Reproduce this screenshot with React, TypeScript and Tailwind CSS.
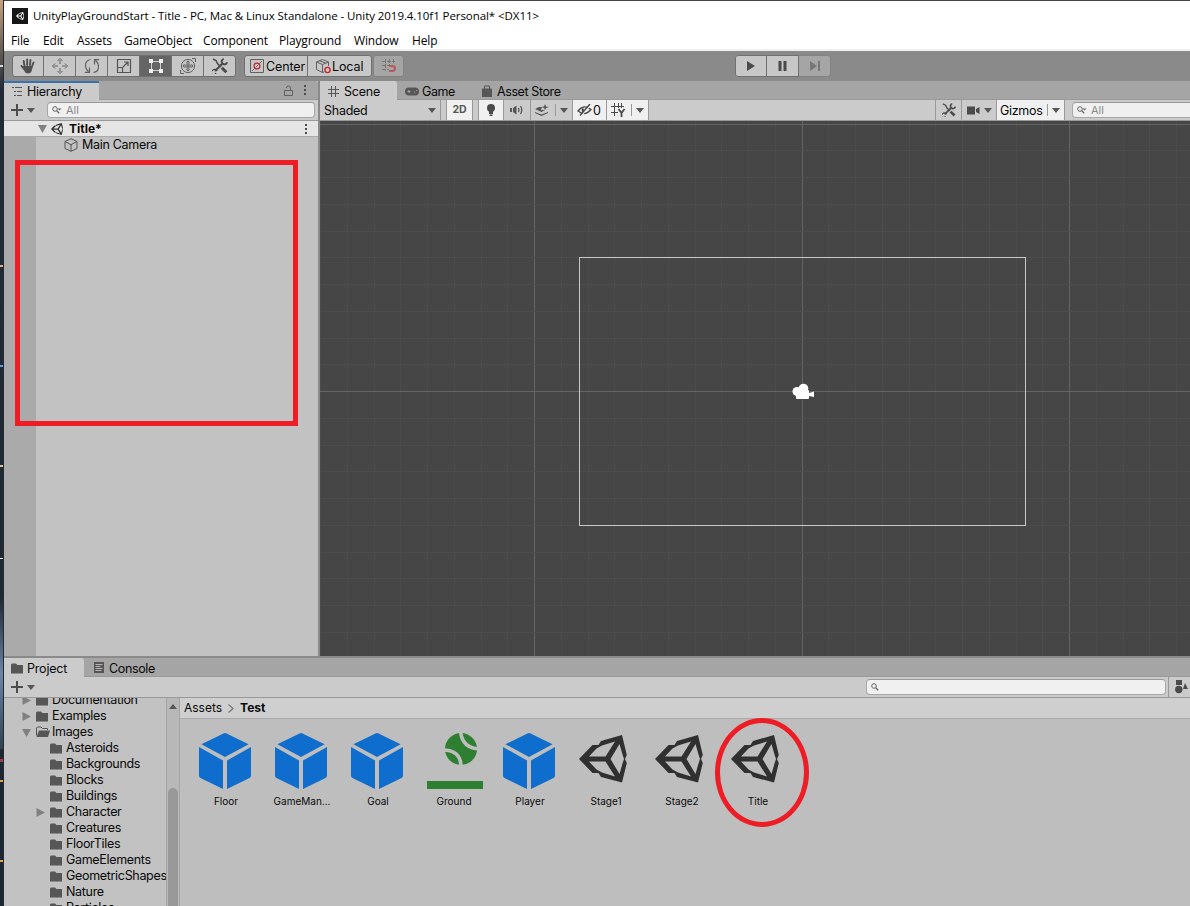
import type { ReactNode } from "react";

// ─── Icons ───────────────────────────────────────────────────────────────────

type IconProps = { className?: string };

function UnityMark({ className = "" }: IconProps) {
  return (
    <svg viewBox="0 0 48 48" className={`shrink-0 ${className}`}>
      <path
        d="M0 24 L13.5 10 H19.5 L22 6 L43 0 L47.8 20 L46 24 L47.8 28 L43 47.500 L22 42 L19.5 38 H13.5 Z M10 21.500 H26.500 L36 6.500 L23 10.500 L17.500 13.500 Z M10 26.500 L17.500 34.500 L23 37.500 L36 41.500 L26.500 26.500 Z M31.500 24 L40.500 39 L43.500 28.500 L45 24 L43.500 19.500 L40.500 9 Z"
        fill="currentColor"
        fillRule="evenodd"
      />
    </svg>
  );
}

function PrefabCube() {
  return (
    <svg width="52" height="56" viewBox="0 0 52 56" fill="#0f6dcd">
      <path d="M24.500 0.400 Q26 -0.200 27.500 0.400 L49.600 11.200 L26 24 L2.400 11.200 Z" />
      <path d="M0 14 L24 27.500 V56 L1.500 45 Q0 44 0 42.500 Z" />
      <path d="M52 14 L28 27.500 V56 L50.500 45 Q52 44 52 42.500 Z" />
    </svg>
  );
}

function GroundIcon() {
  return (
    <svg width="56" height="56" viewBox="0 0 56 56" className="ml-1">
      <circle cx="34" cy="16" r="16" fill="#2f7f33" />
      <path d="M33.500 -2 Q35 15 52 16 M16 17 Q34 17 34 34" stroke="#bebebe" strokeWidth="3.600" fill="none" />
      <rect x="0" y="48" width="56" height="8" fill="#2f7f33" />
    </svg>
  );
}

function Folder({ open = false }: { open?: boolean }) {
  return open ? (
    <svg width="14" height="12" viewBox="0 0 14 12" className="shrink-0">
      <path d="M0.500 9.500 V2 L1.500 1 H5 L6.500 2.500 H11.500 V4" fill="none" stroke="#565656" />
      <path d="M3 4.500 H14 L12 11 H0.500 Z" fill="#565656" />
    </svg>
  ) : (
    <svg width="12" height="11" viewBox="0 0 12 11" className="shrink-0">
      <path d="M0 1.500 L1 0.500 H5 L6.500 2 H12 V10.500 H0 Z" fill="#565656" />
    </svg>
  );
}

function Caret({ className = "" }: IconProps) {
  return (
    <svg width="8" height="5" viewBox="0 0 8 5" className={`shrink-0 ${className}`}>
      <path d="M0 0 H8 L4 5 Z" fill="#565656" />
    </svg>
  );
}

function Fold({ open = false }: { open?: boolean }) {
  return (
    <svg width="9" height="9" viewBox="0 0 9 9" className="shrink-0">
      <path d={open ? "M0 1 H9 L4.500 9 Z" : "M0.500 0 L9 4.500 L0.500 9 Z"} fill="#808080" />
    </svg>
  );
}

function Search({ menu = false }: { menu?: boolean }) {
  return (
    <svg width="12" height="10" viewBox="0 0 12 10" fill="none" stroke="#666" className="shrink-0">
      <circle cx="3" cy="4" r="2.300" />
      <path d="M4.800 5.800 L7.200 8.200" strokeWidth="1.300" />
      {menu && <path d="M5.500 3.500 H9.500 L7.500 5.500 Z" fill="#666" stroke="none" />}
    </svg>
  );
}

function Tools({ className = "" }: IconProps) {
  return (
    <svg viewBox="0 0 16 16" fill="none" stroke="#4a4a4a" className={`shrink-0 ${className}`}>
      <path d="M1 1 L4 2.500 L5.500 5.500 L9 9" strokeWidth="1.500" />
      <path d="M9.800 9.800 L14.300 14.300" strokeWidth="3" />
      <path d="M3 13 L11 5" strokeWidth="2" />
      <path d="M11.800 0.900 A2.700 2.700 0 0 0 10.500 5.500 A2.700 2.700 0 0 0 15.100 4.200" strokeWidth="1.900" />
      <path d="M1 12.200 A2.300 2.300 0 1 0 3.800 15 M1 12.200 A2.300 2.300 0 0 1 5 13" strokeWidth="1.300" />
    </svg>
  );
}

function GameObjectCube() {
  return (
    <svg width="14" height="14" viewBox="0 0 14 14" fill="none" stroke="#555" className="shrink-0">
      <path d="M7 0.700 L13 3.500 V10.500 L7 13.300 L1 10.500 V3.500 Z M1 3.500 L7 6.700 L13 3.500 M7 6.700 V13.300" strokeLinejoin="round" />
    </svg>
  );
}

function Dots() {
  return (
    <svg width="2" height="10" viewBox="0 0 2 10" fill="#4a4a4a" className="shrink-0">
      <rect width="2" height="2" />
      <rect y="4" width="2" height="2" />
      <rect y="8" width="2" height="2" />
    </svg>
  );
}

function Plus() {
  return (
    <svg width="12" height="12" viewBox="0 0 12 12" className="shrink-0">
      <path d="M6 0 V12 M0 6 H12" stroke="#4c4c4c" strokeWidth="2" />
    </svg>
  );
}

function GridGlyph({ className = "" }: IconProps) {
  return (
    <svg width="11" height="11" viewBox="0 0 11 11" className={`shrink-0 ${className}`}>
      <path d="M3.500 0 V11 M7.500 0 V11 M0 3.500 H11 M0 7.500 H11" stroke="#565656" fill="none" />
    </svg>
  );
}

// ─── Main toolbar ────────────────────────────────────────────────────────────

const transformTools: { id: string; icon: ReactNode }[] = [
  {
    id: "hand",
    icon: (
      <g fill="none" stroke="#505050" strokeLinecap="round">
        <path d="M4.500 8 L3.700 3 M7.200 7 V1.500 M10 7 L10.500 2 M12 8.500 L13.500 4.500 M4.500 11 L1.500 8" strokeWidth="1.900" />
        <path d="M4 8 L12.600 8 Q12.500 13 10 15.300 H6 Q3.500 12.500 2.500 9.500 Z" fill="#505050" stroke="none" />
      </g>
    ),
  },
  {
    id: "move",
    icon: (
      <g fill="none" stroke="#606060">
        <path d="M8 6 V2 M8 10 V14 M6 8 H2 M10 8 H14" />
        <path d="M5.500 3 L8 0.500 L10.500 3 M5.500 13 L8 15.500 L10.500 13 M3 5.500 L0.500 8 L3 10.500 M13 5.500 L15.500 8 L13 10.500" />
      </g>
    ),
  },
  {
    id: "rotate",
    icon: (
      <g fill="none" stroke="#606060" strokeWidth="1.200">
        <path d="M6.500 1.500 C0.500 2.500 0 9.500 4.500 13.500 M5.500 9.500 V14.300 H0.800" />
        <path d="M9.500 14.500 C15.500 13.500 16 6.500 11.500 2.500 M10.500 6.500 V1.700 H15.200" />
      </g>
    ),
  },
  {
    id: "scale",
    icon: (
      <g fill="none" stroke="#555" strokeWidth="1.200">
        <path d="M1.500 1.500 H14.500 V14.500 H1.500 Z M1.500 9.500 H6.500 V14.500 M7 9 L12 4 M8 4 H12 V8" />
      </g>
    ),
  },
  {
    id: "rect",
    icon: (
      <g fill="#f0f0f0">
        <path d="M3.500 3.500 H12.500 V12.500 H3.500 Z" fill="none" stroke="#d0d0d0" />
        <rect x="1" y="1" width="4" height="4" />
        <rect x="11" y="1" width="4" height="4" />
        <rect x="1" y="11" width="4" height="4" />
        <rect x="11" y="11" width="4" height="4" />
      </g>
    ),
  },
  {
    id: "transform",
    icon: (
      <g fill="none" stroke="#606060">
        <circle cx="8" cy="8" r="6.600" />
        <path d="M8 3 V13 M3 8 H13 M6.300 4.500 L8 3 L9.700 4.500 M6.300 11.500 L8 13 L9.700 11.500 M4.500 6.300 L3 8 L4.500 9.700 M11.500 6.300 L13 8 L11.500 9.700" />
        <path d="M12 0.500 H15.500 V4 M0.500 12 V15.500 H4" />
        <path d="M6 6 H10 V10 H6 Z" strokeWidth="0.600" />
      </g>
    ),
  },
];

function Toolbar() {
  return (
    <div className="flex h-[30px] shrink-0 items-start bg-[#8a8a8a] pt-1 pl-2">
      <div className="flex h-[22px] w-[224px] overflow-hidden rounded-[3px] border border-[#707070] bg-[#c7c7c7]">
        {transformTools.map((tool) => (
          <div
            key={tool.id}
            className={`flex shrink-0 items-center justify-center border-r border-[#707070] ${tool.id === "hand" ? "w-[31px]" : "w-8"} ${tool.id === "rect" ? "bg-[#656565]" : ""}`}
          >
            <svg width="16" height="16" viewBox="0 0 16 16">{tool.icon}</svg>
          </div>
        ))}
        <div className="flex flex-1 items-center justify-center">
          <Tools className="size-4" />
        </div>
      </div>

      <div className="ml-2 flex h-[22px] w-[128px] rounded-[3px] border border-[#707070] bg-[#c7c7c7] text-[12.500px]">
        <div className="flex w-[63px] items-center border-r border-[#707070] pl-1">
          <svg width="16" height="16" viewBox="0 0 16 16" fill="none" className="shrink-0">
            <path d="M1.500 1.500 H14.500 V14.500 H1.500 Z" stroke="#606060" />
            <path d="M10 6 L13 3 M6 10 L3 13" stroke="#707070" />
            <circle cx="8" cy="8" r="2.900" stroke="#c0282c" strokeWidth="1.200" />
            <path d="M6.500 9.500 L9.500 6.500" stroke="#c0282c" strokeWidth="0.700" />
          </svg>
          <span className="mt-px ml-px tracking-[-0.100px]">Center</span>
        </div>
        <div className="flex flex-1 items-center pl-[7px]">
          <svg width="17" height="16" viewBox="0 0 17 16" fill="none" stroke="#606060" className="shrink-0">
            <path d="M9 14 L7.500 14.500 L1.500 11.500 V4 L7.500 1.500 L13.500 4 V8 M1.500 4 L7.500 6.500 L13.500 4 M7.500 6.500 V14.500 M4.500 2.800 L10.500 5" />
            <circle cx="12.500" cy="12" r="2.600" stroke="#c0282c" strokeWidth="1.400" />
          </svg>
          <span className="mt-px tracking-[-0.100px]">Local</span>
        </div>
      </div>

      <div className="ml-px flex h-[22px] w-[31px] items-center justify-center rounded-[3px] border border-[#828282] bg-[#a5a5a5]">
        <svg width="16" height="16" viewBox="0 0 16 16" fill="none">
          <path d="M4.500 1 V13 M8.500 1 V7 M12.500 1 V5 M1 3.500 H14 M1 7.500 H8 M1 11.500 H8" stroke="#777" strokeDasharray="4 1" />
          <path d="M8 8 H11.500 A2.500 2.500 0 0 1 11.500 13 H8" stroke="#b8585a" strokeWidth="2" />
        </svg>
      </div>

      <div className="ml-[331px] flex h-[22px] w-[96px] overflow-hidden rounded-[3px]">
        <div className="flex w-8 items-center justify-center rounded-l-[3px] border border-[#707070] bg-[#c7c7c7]">
          <svg width="10" height="12" viewBox="0 0 10 12"><path d="M1 1 L9 6 L1 11 Z" fill="#4a4a4a" /></svg>
        </div>
        <div className="flex w-8 items-center justify-center border-y border-r border-[#707070] bg-[#c7c7c7]">
          <svg width="9" height="10" viewBox="0 0 9 10"><path d="M0.500 0 H3.500 V10 H0.500 Z M5.500 0 H8.500 V10 H5.500 Z" fill="#4a4a4a" /></svg>
        </div>
        <div className="flex w-8 items-center justify-center rounded-r-[3px] border-y border-r border-[#828282] bg-[#a5a5a5]">
          <svg width="12" height="12" viewBox="0 0 12 12"><path d="M1 1 L8 6 L1 11 Z M9 1 H11 V11 H9 Z" fill="#777" /></svg>
        </div>
      </div>
    </div>
  );
}

// ─── Hierarchy ───────────────────────────────────────────────────────────────

function Hierarchy() {
  return (
    <section className="flex w-[314px] shrink-0 flex-col bg-[#c2c2c2]">
      <div className="flex h-[19px] shrink-0 rounded-t-[3px] bg-[#a5a5a5]">
        <div className="flex w-[95px] items-center border-t-2 border-[#3a72b0] bg-[#cbcbcb] pl-2">
          <svg width="11" height="11" viewBox="0 0 11 11" className="shrink-0" stroke="#565656">
            <path d="M0 1.500 H2 M3 1.500 H10 M2 5.500 H4 M5 5.500 H10 M2 9.500 H4 M5 9.500 H10" />
          </svg>
          <span className="ml-[4px] tracking-[-0.250px]">Hierarchy</span>
        </div>
        <div className="flex flex-1 items-center justify-end gap-[11px] border-b border-[#999] pr-3">
          <svg width="9" height="11" viewBox="0 0 9 11" fill="none" stroke="#606060">
            <path d="M0.500 5.500 H8.500 V10.500 H0.500 Z M6.500 5.500 V3 A2 2 0 0 0 2.500 3" />
          </svg>
          <Dots />
        </div>
      </div>
      <div className="flex h-[21px] shrink-0 items-center border-b border-[#999] bg-[#cbcbcb] pl-[7px]">
        <Plus />
        <Caret className="ml-1" />
        <div className="ml-[12px] flex h-4 w-[268px] items-center rounded-[4px] border border-[#a8a8a8] border-t-[#999] bg-[#f0f0f0] pl-1 text-[11px] text-[#888]">
          <Search menu />
          <span className="ml-[2px]">All</span>
        </div>
      </div>
      <div className="flex h-4 shrink-0 items-center border-b border-[#aaa] bg-[#e5e5e5] pr-[11px] pl-[34px]">
        <Fold open />
        <UnityMark className="ml-1 size-3 text-[#333]" />
        <span className="ml-[6px] text-[12px] font-bold">Title*</span>
        <span className="flex-1" />
        <Dots />
      </div>
      <div className="flex min-h-0 flex-1">
        <div className="w-8 bg-[#aaaaaa]" />
        <div className="flex h-4 items-center pl-[28px]">
          <GameObjectCube />
          <span className="ml-[4px] tracking-[-0.300px]">Main Camera</span>
        </div>
      </div>
    </section>
  );
}

// ─── Scene view ──────────────────────────────────────────────────────────────

const GRID = 26.75;
const columns = Array.from({ length: 33 }, (_, i) => i - 18);
const rows = Array.from({ length: 20 }, (_, i) => i - 10);

function SceneCanvas() {
  return (
    <svg width="870" height="535" viewBox="0 0 870 535" className="block" shapeRendering="crispEdges">
      <rect width="870" height="535" fill="#464646" />
      {columns.map((c) => (
        <rect key={c} x={Math.floor(482 + c * GRID)} y="0" width="1" height="535" fill={c % 10 === 0 ? "#646464" : "#4c4c4c"} />
      ))}
      {rows.map((r) => (
        <rect key={r} x="0" y={Math.round(270 + r * GRID)} width="870" height="1" fill={r % 10 === 0 ? "#646464" : "#4c4c4c"} />
      ))}
      <rect x="259.500" y="136.500" width="446" height="268" fill="none" stroke="#c8c8c8" />
      <g fill="#fff" shapeRendering="auto">
        <circle cx="477" cy="270.500" r="4.500" />
        <circle cx="483.500" cy="267.500" r="4.800" />
        <rect x="476" y="269" width="13" height="9" rx="1" />
        <path d="M489 272 L494 270.500 V276 L489 275 Z" />
      </g>
    </svg>
  );
}

function SceneView() {
  return (
    <section className="flex min-w-0 flex-1 flex-col">
      <div className="flex h-[19px] shrink-0 bg-[#a5a5a5]">
        <div className="flex w-[77px] items-center rounded-tr-[3px] bg-[#cbcbcb] pt-[2px] pl-2">
          <GridGlyph />
          <span className="ml-[5px] tracking-[-0.200px]">Scene</span>
        </div>
        <div className="flex flex-1 items-center border-b border-[#999] pt-[3px] pl-2">
          <svg width="14" height="9" viewBox="0 0 14 9">
            <rect x="0" y="0.500" width="14" height="8" rx="4" fill="#565656" />
            <path d="M2.500 4.500 H5.500 M4 3 V6 M9 5 H10 M11 3.500 H12" stroke="#a5a5a5" />
          </svg>
          <span className="ml-[3px] w-[60px] tracking-[-0.400px]">Game</span>
          <svg width="10" height="12" viewBox="0 0 10 12" className="-mt-px">
            <path d="M0 3.500 H10 V12 H0 Z" fill="#565656" />
            <path d="M2.500 4 V1 H7.500 V4" fill="none" stroke="#565656" />
          </svg>
          <span className="ml-[5px] tracking-[-0.400px]">Asset Store</span>
        </div>
      </div>
      <div className="flex h-[21px] shrink-0 border-b border-[#999] bg-[#cbcbcb]">
        <div className="flex w-[121px] items-center justify-between border-r border-[#999] pr-1 pl-1 tracking-[-0.250px]">
          <span className="pt-px">Shaded</span>
          <Caret />
        </div>
        <div className="ml-[5px] flex w-[27px] items-center justify-center border-x border-[#999] bg-[#f0f0f0] text-[10.500px] font-bold text-[#565656]">2D</div>
        <div className="ml-[5px] flex w-[26px] items-center justify-center border-x border-[#999] bg-[#f0f0f0]">
          <svg width="8" height="12" viewBox="0 0 8 12" fill="#4a4a4a">
            <circle cx="4" cy="4" r="4" />
            <path d="M2 6 H6 V10 H2 Z M2.500 10.500 H5.500 V12 H2.500 Z" />
          </svg>
        </div>
        <div className="flex w-[26px] items-center justify-center">
          <svg width="14" height="10" viewBox="0 0 14 10" fill="none" stroke="#565656">
            <path d="M0 3 H2 V7 H0 Z M3 3 L6.500 0.500 V9.500 L3 7 Z" fill="#565656" stroke="none" />
            <path d="M8.500 3 Q9.500 5 8.500 7 M10.500 1 Q13 5 10.500 9" strokeWidth="1.300" />
          </svg>
        </div>
        <div className="flex w-[43px] items-center border-x border-[#999] pl-1">
          <svg width="14" height="12" viewBox="0 0 14 12" fill="#565656" className="shrink-0">
            <path d="M0 5 L4 3 H7 L6 6 H10 L6.500 8 Z M0 8 L6.500 10.500 L13 8 V9 L6.500 12 L0 9 Z M10 0 L11 2.500 L14 3 L11 4 L10 6 L9 4 L6.500 3 L9 2.500 Z" />
          </svg>
          <span className="ml-[6px] h-3 w-px bg-[#999]" />
          <Caret className="ml-1" />
        </div>
        <div className="flex w-[34px] items-center border-r border-[#999] bg-[#f0f0f0] pl-1">
          <svg width="16" height="12" viewBox="0 0 16 12" fill="none" stroke="#4a4a4a" className="shrink-0">
            <path d="M1 7 Q7 -0.500 14 5.500 Q8 12.500 1 7 Z" strokeWidth="1.400" />
            <path d="M6 4.500 Q5 7 7 8" strokeWidth="2" />
            <path d="M14 0.500 L4 12" stroke="#f0f0f0" strokeWidth="1.200" />
            <path d="M13 0 L3 11.500" strokeWidth="1.400" />
          </svg>
          <span className="pt-px">0</span>
        </div>
        <div className="flex w-[42px] items-center border-r border-[#999] bg-[#f0f0f0] pl-1">
          <svg width="15" height="14" viewBox="0 0 15 14" fill="none" stroke="#4a4a4a">
            <path d="M3.500 0 V13 M7.500 0 V5 M10.500 0 V5 M0 3.500 H13 M0 9.500 H7" />
            <path d="M7.500 6 L10.500 10 L13.500 6 M10.500 9.500 V14" strokeWidth="1.800" />
          </svg>
          <span className="ml-[5px] h-3 w-px bg-[#999]" />
          <Caret className="ml-1" />
        </div>

        <div className="ml-[286px] flex w-[27px] items-center justify-center border-x border-[#999]">
          <Tools className="size-[14px]" />
        </div>
        <div className="flex w-[35px] items-center border-r border-[#999] pl-[5px]">
          <svg width="13" height="9" viewBox="0 0 13 9" fill="#4a4a4a">
            <path d="M0 0.500 H8 V8.500 H0 Z M9 3 L12.500 1 V8 L9 6 Z" />
          </svg>
          <Caret className="ml-1" />
        </div>
        <div className="flex w-[68px] items-center border-r border-[#999] bg-[#f0f0f0] pl-[3px]">
          <span className="w-[47px] pt-px tracking-[-0.300px]">Gizmos</span>
          <span className="h-3 w-px bg-[#999]" />
          <Caret className="ml-1" />
        </div>
        <div className="mt-[2px] ml-[7px] flex h-4 flex-1 items-center rounded-l-[4px] border border-r-0 border-[#a8a8a8] border-t-[#999] bg-[#f0f0f0] pl-1 text-[11px] text-[#888]">
          <Search menu />
          <span className="ml-[2px]">All</span>
        </div>
      </div>
      <SceneCanvas />
    </section>
  );
}

// ─── Project ─────────────────────────────────────────────────────────────────

type TreeNode = { name: string; depth: 1 | 2; state?: "open" | "closed" };

const tree: TreeNode[] = [
  { name: "Documentation", depth: 1, state: "closed" },
  { name: "Examples", depth: 1, state: "closed" },
  { name: "Images", depth: 1, state: "open" },
  { name: "Asteroids", depth: 2 },
  { name: "Backgrounds", depth: 2 },
  { name: "Blocks", depth: 2 },
  { name: "Buildings", depth: 2 },
  { name: "Character", depth: 2, state: "closed" },
  { name: "Creatures", depth: 2 },
  { name: "FloorTiles", depth: 2 },
  { name: "GameElements", depth: 2 },
  { name: "GeometricShapes", depth: 2 },
  { name: "Nature", depth: 2 },
  { name: "Particles", depth: 2 },
];

const assets: { name: string; kind: "prefab" | "ground" | "scene" }[] = [
  { name: "Floor", kind: "prefab" },
  { name: "GameMan...", kind: "prefab" },
  { name: "Goal", kind: "prefab" },
  { name: "Ground", kind: "ground" },
  { name: "Player", kind: "prefab" },
  { name: "Stage1", kind: "scene" },
  { name: "Stage2", kind: "scene" },
  { name: "Title", kind: "scene" },
];

function Project() {
  return (
    <section className="flex min-h-0 flex-1 flex-col">
      <div className="flex h-[19px] shrink-0 bg-[#a5a5a5]">
        <div className="flex w-[80px] items-center rounded-tr-[3px] bg-[#cbcbcb] pt-[2px] pl-[7px]">
          <Folder />
          <span className="ml-[4px] tracking-[-0.200px]">Project</span>
        </div>
        <div className="flex flex-1 items-center border-b border-[#999] pt-[3px] pl-[10px]">
          <svg width="10" height="11" viewBox="0 0 10 11" className="-mt-[2px]">
            <path d="M0 0 H10 V11 H0 Z" fill="#565656" />
            <path d="M1.500 2.500 H8.500 M1.500 4.500 H6.500 M1.500 6.500 H8.500 M1.500 8.500 H7.500" stroke="#b5b5b5" />
          </svg>
          <span className="ml-[5px] tracking-[-0.350px]">Console</span>
        </div>
      </div>
      <div className="flex h-[21px] shrink-0 items-center border-b border-[#999] bg-[#cbcbcb] pl-[7px]">
        <Plus />
        <Caret className="ml-1" />
        <span className="flex-1" />
        <div className="flex h-4 w-[300px] items-center rounded-[4px] border border-[#a8a8a8] border-t-[#999] bg-[#f0f0f0] pl-1">
          <Search />
        </div>
        <div className="ml-[2px] flex h-full w-[22px] items-center border-l border-[#999] pl-[6px]">
          <svg width="15" height="14" viewBox="0 0 15 14" fill="#4a4a4a" className="shrink-0">
            <path d="M1 0 H7 V5 H1 Z M8 9 L10 3 L13 9 Z" />
            <circle cx="3.800" cy="9.500" r="3.700" />
          </svg>
        </div>
      </div>

      <div className="flex min-h-0 flex-1">
        <div className="flex w-[162px] shrink-0 flex-col overflow-hidden bg-[#c2c2c2]">
          <div className="-mt-[6px] flex flex-col">
            {tree.map((node) => (
              <div key={node.name} className={`flex h-4 shrink-0 items-center whitespace-nowrap ${node.depth === 1 ? "pl-[18px]" : "pl-[32px]"}`}>
                <span className="flex w-[14px] shrink-0">{node.state && <Fold open={node.state === "open"} />}</span>
                <span className="flex w-4 shrink-0">
                  <Folder open={node.state === "open"} />
                </span>
                <span className="tracking-[-0.320px]">{node.name}</span>
              </div>
            ))}
          </div>
        </div>
        <div className="flex w-[14px] shrink-0 flex-col items-center border-x border-[#a5a5a5] bg-[#b8b8b8] pt-[6px]">
          <svg width="8" height="5" viewBox="0 0 8 5"><path d="M0 5 L4 0 L8 5 Z" fill="#565656" /></svg>
          <div className="mt-[79px] w-[10px] flex-1 rounded-t-[5px] bg-[#999]" />
        </div>
        <div className="flex min-w-0 flex-1 flex-col bg-[#bebebe]">
          <div className="flex h-[21px] shrink-0 items-center border-b border-[#aaa] bg-[#cfcfcf] pl-1 text-[12px]">
            <span>Assets</span>
            <svg width="6" height="9" viewBox="0 0 6 9" fill="none" stroke="#777" strokeWidth="1.300" className="mx-[6px]">
              <path d="M0.500 0.500 L5 4.500 L0.500 8.500" />
            </svg>
            <span className="font-bold">Test</span>
          </div>
          <div className="flex pt-[14px] pl-[7px]">
            {assets.map((asset) => (
              <div key={asset.name} className="flex w-[76px] shrink-0 flex-col items-center">
                <div className="flex h-[57px] items-start justify-center">
                  {asset.kind === "prefab" && <PrefabCube />}
                  {asset.kind === "ground" && <GroundIcon />}
                  {asset.kind === "scene" && <UnityMark className="mt-[2px] mr-1 size-[48px] text-[#303030]" />}
                </div>
                <span className="mt-1 ml-[2px] text-[10px] leading-[14px]">{asset.name}</span>
              </div>
            ))}
          </div>
        </div>
      </div>
    </section>
  );
}

// ─── Window ──────────────────────────────────────────────────────────────────

const menus = [
  { label: "File", width: "w-[32px]" },
  { label: "Edit", width: "w-[34px]" },
  { label: "Assets", width: "w-[47px]" },
  { label: "GameObject", width: "w-[79px]" },
  { label: "Component", width: "w-[76px]" },
  { label: "Playground", width: "w-[75px]" },
  { label: "Window", width: "w-[58px]" },
  { label: "Help", width: "w-[40px]" },
];

export default function App() {
  return (
    <div className="relative flex h-[906px] w-[1190px] overflow-hidden bg-[#1d2733] font-['Inter','Liberation_Sans',sans-serif] text-[12.500px] leading-4 text-[#090909]">
      <div className="w-1 shrink-0 border-r border-[#262a30] bg-linear-to-b from-[#c9a27c] from-0% via-[#202b38] via-10% to-[#1d2733]">
        {/* desktop icons peeking out from behind the window */}
        <div className="flex flex-col">
          <span className="mt-[65px] h-[2px] w-[3px] bg-[#d8d8d8]" />
          <span className="mt-[198px] h-[2px] w-[3px] bg-[#e0b080]" />
          <span className="mt-[98px] h-[2px] w-[3px] bg-[#5d9fdc]" />
          <span className="mt-[98px] h-[2px] w-[3px] bg-[#d8c8a0]" />
          <span className="mt-[91px] h-px w-[3px] bg-[#f0f0f0]" />
          <span className="mt-[40px] h-[150px] w-[3px] bg-linear-to-b from-[#202b38] via-[#6c86a6] to-[#2e4154]" />
          <span className="mt-[10px] h-[3px] w-[3px] bg-[#a04048]" />
          <span className="mt-[18px] h-[2px] w-[3px] bg-[#e0a050]" />
          <span className="mt-[78px] h-[2px] w-[3px] bg-[#e0a050]" />
        </div>
      </div>
      <div className="flex min-w-0 flex-1 flex-col border-t border-[#444] bg-[#8a8a8a]">
        <header className="flex h-[50px] shrink-0 flex-col border-b-2 border-[#f0f0f0] bg-white font-['Open_Sans','Noto_Sans',sans-serif] text-black">
          <div className="flex h-[29px] items-center pl-2">
            <span className="flex size-4 items-center justify-center bg-[#161616]">
              <UnityMark className="size-2 text-white" />
            </span>
            <span className="ml-[5px] text-[11.500px] tracking-[-0.065px] whitespace-pre">UnityPlayGroundStart - Title - PC, Mac &amp; Linux Standalone - Unity 2019.4.10f1 Personal* &lt;DX11&gt;</span>
          </div>
          <nav className="flex h-[19px] items-center pt-[3px] pl-[7px] text-[12px] tracking-[-0.150px]">
            {menus.map((menu) => (
              <span key={menu.label} className={menu.width}>{menu.label}</span>
            ))}
          </nav>
        </header>
        <Toolbar />
        <main className="flex h-[575px] shrink-0 gap-[2px]">
          <Hierarchy />
          <SceneView />
        </main>
        <div className="h-[2px] shrink-0 bg-[#8a8a8a]" />
        <Project />
      </div>

      {/* annotations drawn over the editor */}
      <div className="absolute top-[160px] left-[15px] h-[266px] w-[283px] border-[5px] border-[#ee1c24]" />
      <div className="absolute top-[718px] left-[715px] h-[109px] w-[94px] rounded-[50%] border-[5px] border-[#ee1c24]" />
    </div>
  );
}
